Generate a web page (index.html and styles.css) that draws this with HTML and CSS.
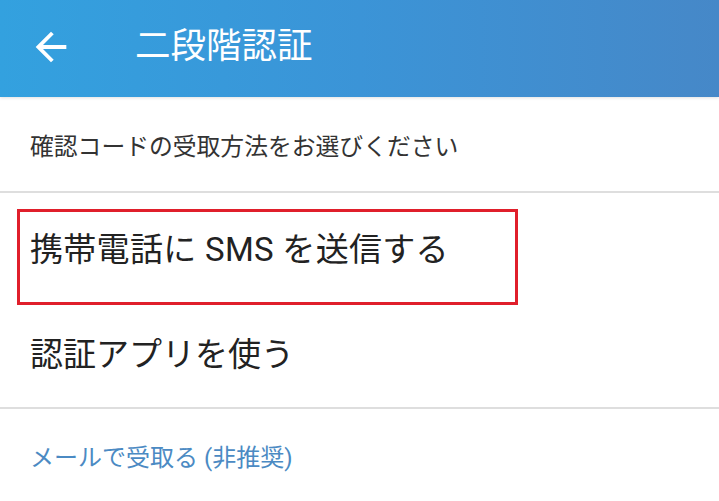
FILE: index.html
```html
<!DOCTYPE html>
<html lang="ja">
<head>
<meta charset="utf-8">
<link rel="stylesheet" href="styles.css">
</head>
<body>
<header class="appbar">
  <span class="back">
    <svg viewBox="0 0 24 24" width="46" height="46"><path fill="#fff" d="M20 11H7.83l5.59-5.59L12 4l-8 8 8 8 1.41-1.41L7.83 13H20v-2z"/></svg>
  </span>
  <h1 class="title">二段階認証</h1>
</header>
<main>
  <p class="subtitle">確認コードの受取方法をお選びください</p>
  <div class="options">
    <div class="option option-highlight">携帯電話に SMS を送信する</div>
    <div class="option option-plain">認証アプリを使う</div>
  </div>
  <a class="mail-link">メールで受取る (非推奨)</a>
</main>
</body>
</html>
```
FILE: styles.css
```css
* { box-sizing: border-box; }
html, body { margin: 0; padding: 0; background: #fff; }
body {
  font-family: "Roboto", "Noto Sans CJK JP", sans-serif;
  width: 719px;
  overflow: hidden;
}
.appbar {
  height: 97px;
  background: linear-gradient(90deg, #33a1df 0%, #3b94d7 50%, #4688c8 100%);
  display: flex;
  align-items: center;
  box-shadow: 0 1px 3px rgba(0,0,0,0.12);
  position: relative;
}
.back {
  display: flex;
  margin-left: 28px;
  margin-top: -4px;
}
.title {
  margin: -5px 0 0 61px;
  font-size: 35.5px;
  font-weight: 400;
  color: #fff;
  line-height: 40px;
}
main { display: block; }
.subtitle {
  margin: 0;
  height: 96px;
  padding: 1px 0 0 30px;
  display: flex;
  align-items: center;
  font-size: 23.8px;
  color: #333;
  border-bottom: 2px solid #dedede;
}
.options {
  padding-top: 16px;
  border-bottom: 2px solid #dedede;
  padding-bottom: 32px;
}
.option {
  font-size: 33px;
  line-height: 40px;
  color: #222;
}
.option-highlight {
  margin-left: 17px;
  width: 501px;
  height: 96px;
  border: 3px solid #e01f2b;
  padding: 18px 0 0 10px;
  letter-spacing: 0.3px;
}
.option-plain {
  margin-top: 30px;
  padding-left: 30px;
}
.mail-link {
  display: block;
  margin-top: 34px;
  padding-left: 30px;
  font-size: 24px;
  line-height: 30px;
  color: #4b8ac3;
}
```
